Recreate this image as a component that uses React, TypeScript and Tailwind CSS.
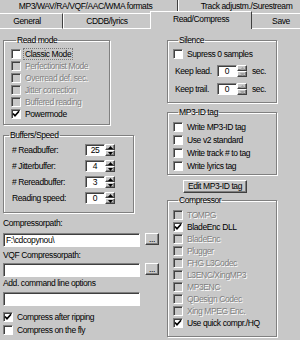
import React from "react";

const DIS = "text-[#808080] [text-shadow:1px_1px_0_#fff]";
const SUNKEN =
  "border border-t-[#808080] border-l-[#808080] border-r-white border-b-white shadow-[inset_1px_1px_0_#404040]";
const RAISED =
  "border border-t-white border-l-white border-r-[#404040] border-b-[#404040] shadow-[inset_-1px_-1px_0_#808080]";

function Check({
  label,
  checked,
  disabled,
  focus,
}: {
  label: string;
  checked?: boolean;
  disabled?: boolean;
  focus?: boolean;
}) {
  return (
    <div className="flex items-center h-[12px] whitespace-nowrap">
      <div
        className={`w-[10px] h-[10px] shrink-0 flex items-center justify-center ${SUNKEN} ${
          disabled ? "bg-[#c8c8c8]" : "bg-white"
        }`}
      >
        {checked && (
          <svg width="8" height="8" viewBox="0 0 8 8">
            <path d="M1 3.5 L3 5.8 L7 1.2" stroke="black" strokeWidth="1.7" fill="none" />
          </svg>
        )}
      </div>
      <span
        className={`leading-[10px] ${disabled ? DIS : ""} ${
          focus ? "ml-[3px] px-[1px] outline outline-1 outline-dotted outline-[#777]" : "ml-[4px]"
        }`}
      >
        {label}
      </span>
    </div>
  );
}

function SpinBtn({ up, disabled }: { up?: boolean; disabled?: boolean }) {
  return (
    <div className={`h-1/2 w-full bg-[#c8c8c8] flex items-center justify-center ${RAISED}`}>
      <svg width="5" height="3" viewBox="0 0 5 3">
        <path
          d={up ? "M0 3 L5 3 L2.5 0 Z" : "M0 0 L5 0 L2.5 3 Z"}
          fill={disabled ? "#a0a0a0" : "black"}
        />
      </svg>
    </div>
  );
}

function Spin({ value, disabled }: { value: string; disabled?: boolean }) {
  return (
    <div className="flex h-[12px] shrink-0">
      <div className={`w-[20px] h-full bg-white flex items-center justify-center leading-none ${SUNKEN}`}>
        {value}
      </div>
      <div className="flex flex-col w-[10px] h-full">
        <SpinBtn up disabled={disabled} />
        <SpinBtn disabled={disabled} />
      </div>
    </div>
  );
}

function Group({
  title,
  className,
  children,
}: {
  title: string;
  className?: string;
  children: React.ReactNode;
}) {
  return (
    <fieldset
      className={`border border-[#808080] shadow-[1px_1px_0_#fff,inset_1px_1px_0_#fff] ${className ?? ""}`}
    >
      <legend className="ml-[5px] px-[1px] leading-[10px] h-[10px] whitespace-nowrap">{title}</legend>
      {children}
    </fieldset>
  );
}

function BufRow({ label, value }: { label: string; value: string }) {
  return (
    <div className="flex items-center h-[16px]">
      <div className="w-[81px] pl-[8px] leading-[10px] whitespace-nowrap">{label}</div>
      <Spin value={value} />
    </div>
  );
}

function TextBox({ value, w }: { value?: string; w: string }) {
  return (
    <div className={`h-[14px] bg-white flex items-center pl-[2px] leading-none whitespace-nowrap ${SUNKEN} ${w}`}>
      {value}
    </div>
  );
}

function DotsBtn() {
  return (
    <div className={`ml-[5px] w-[14px] h-[12px] bg-[#c8c8c8] flex items-center justify-center leading-none ${RAISED}`}>
      ...
    </div>
  );
}

export default function App() {
  return (
    <div className="w-[300px] h-[340px] overflow-hidden bg-[#c8c8c8] text-black text-[8.5px] tracking-[-0.4px] font-['Liberation_Sans',Arial,sans-serif] whitespace-nowrap">
      {/* Tabs row 1 */}
      <div className="flex h-[13px]">
        <div className="w-[178px] border-r border-r-[#404040] flex items-center justify-center pr-[6px] leading-none">
          MP3/WAV/RA/VQF/AAC/WMA formats
        </div>
        <div className="flex-1 border-l border-l-white flex items-center justify-center pl-[14px] leading-none">
          Track adjustm./Surestream
        </div>
      </div>
      {/* Tabs row 2 */}
      <div className="flex h-[16px] items-end">
        <div className="w-[63px] h-[16px] border-t border-t-white border-r border-r-[#404040] border-b border-b-white flex items-center justify-center pr-[8px] leading-none">
          General
        </div>
        <div className="w-[87px] h-[16px] border-t border-t-white border-l border-l-white border-b border-b-white flex items-center justify-center leading-none">
          CDDB/lyrics
        </div>
        <div className="relative z-10 w-[102px] h-[18px] -mt-[2px] border-t border-t-white border-l border-l-white border-r border-r-[#404040] bg-[#c8c8c8] flex items-start justify-center pt-[2px] leading-none">
          <span className="mt-[1px]">Read/Compress</span>
        </div>
        <div className="flex-1 h-[16px] border-t border-t-white border-b border-b-white flex items-center justify-center pl-[10px] leading-none">
          Save
        </div>
      </div>

      {/* Content */}
      <div className="flex">
        {/* Left column */}
        <div className="ml-[3px] w-[157px] flex flex-col">
          <Group title="Read mode" className="mt-[6px] w-[107px] pl-[7px] pt-[3px] pb-[4px]">
            <Check label="Classic Mode" focus />
            <Check label="Perfectionist Mode" disabled />
            <Check label="Overread def. sec." disabled />
            <Check label="Jitter correction" disabled />
            <Check label="Buffered reading" disabled />
            <Check label="Powermode" checked />
          </Group>

          <Group title="Buffers/Speed" className="mt-[5px] w-[131px] pt-[2px] pb-[6px]">
            <BufRow label="# Readbuffer:" value="25" />
            <BufRow label="# Jitterbuffer:" value="4" />
            <BufRow label="# Rereadbuffer:" value="3" />
            <BufRow label="Reading speed:" value="0" />
          </Group>

          <div className="mt-[5px] leading-[10px] h-[10px]">Compressorpath:</div>
          <div className="mt-[5px] flex items-start">
            <TextBox value="F:\cdcopynou\" w="w-[137px]" />
            <DotsBtn />
          </div>

          <div className="mt-[3px] leading-[10px] h-[10px]">VQF Compressorpath:</div>
          <div className="mt-[3px] flex items-start">
            <TextBox w="w-[137px]" />
            <DotsBtn />
          </div>

          <div className="mt-[1px] leading-[10px] h-[10px]">Add. command line options</div>
          <div className="mt-[4px] flex items-start">
            <TextBox w="w-[137px]" />
          </div>

          <div className="mt-[5px]">
            <Check label="Compress after ripping" checked />
          </div>
          <div className="mt-[1px]">
            <Check label="Compress on the fly" />
          </div>
        </div>

        {/* Right column */}
        <div className="ml-[7px] w-[110px] flex flex-col">
          <Group title="Silence" className="mt-[6px] w-[110px] pl-[5px] pt-[3px] pb-[7px]">
            <Check label="Supress 0 samples" />
            <div className="mt-[5px] flex items-center h-[12px]">
              <div className="w-[44px] pl-[2px] leading-[10px]">Keep lead.</div>
              <Spin value="0" disabled />
              <span className="ml-[5px] leading-[10px]">sec.</span>
            </div>
            <div className="mt-[6px] flex items-center h-[12px]">
              <div className="w-[44px] pl-[2px] leading-[10px]">Keep trail.</div>
              <Spin value="0" disabled />
              <span className="ml-[5px] leading-[10px]">sec.</span>
            </div>
          </Group>

          <Group title="MP3-ID tag" className="mt-[4px] w-[110px] pl-[5px] pt-[4px] pb-[2px]">
            <div className="flex flex-col gap-[1px]">
              <Check label="Write MP3-ID tag" />
              <Check label="Use v2 standard" />
              <Check label="Write track # to tag" />
              <Check label="Write lyrics tag" />
            </div>
          </Group>

          <div
            className={`mt-[5px] ml-[16px] w-[64px] h-[13px] bg-[#c8c8c8] flex items-center justify-center leading-none ${RAISED}`}
          >
            Edit MP3-ID tag
          </div>

          <Group title="Compressor" className="mt-[2px] w-[110px] pl-[5px] pt-[4px] pb-[7px]">
            <Check label="TOMPG" disabled />
            <Check label="BladeEnc DLL" checked />
            <Check label="BladeEnc" disabled />
            <Check label="Plugger" disabled />
            <Check label="FHG L3Codec" disabled />
            <Check label="L3ENC/XingMP3" disabled />
            <Check label="MP3ENC" disabled />
            <Check label="QDesign Codec" disabled />
            <Check label="Xing MPEG Enc." disabled />
            <Check label="Use quick compr./HQ" checked />
          </Group>
        </div>
      </div>
    </div>
  );
}
